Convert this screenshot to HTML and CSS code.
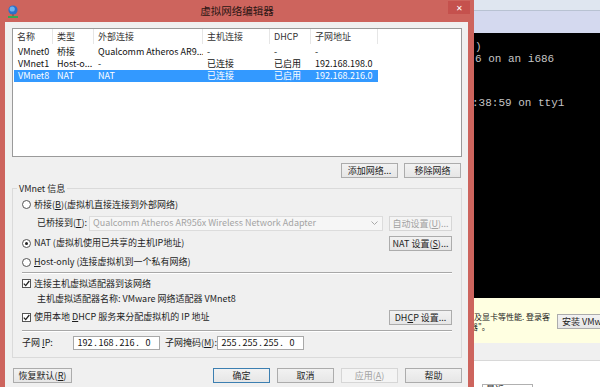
FILE: index.html
```html
<!DOCTYPE html>
<html lang="zh-CN">

<head>
    <meta charset="UTF-8">
    <meta name="viewport" content="width=device-width, initial-scale=1.0">
    <title>虚拟网络编辑器</title>
    <link rel="stylesheet" href="styles.css">
</head>

<body>
    <div class="desktop">
        <!-- 对话框 -->
        <div class="dialog">
            <div class="titlebar">
                <div class="title-left">
                    <svg class="app-icon" width="12" height="13" viewBox="0 0 12 13">
                        <circle cx="6" cy="5" r="4.6" fill="#2b6fc9" />
                        <circle cx="5.2" cy="4" r="2.6" fill="#6fb0ee" />
                        <rect x="5.5" y="9.2" width="1" height="1.8" fill="#555" />
                        <rect x="1" y="11" width="10" height="2" fill="#33a852" />
                    </svg>
                </div>
                <div class="title">虚拟网络编辑器</div>
                <div class="title-right">
                    <div class="close">✕</div>
                </div>
            </div>

            <div class="client">
                <!-- 网络列表 -->
                <div class="listview">
                    <div class="lv-head">
                        <span>名称</span>
                        <span>类型</span>
                        <span>外部连接</span>
                        <span>主机连接</span>
                        <span>DHCP</span>
                        <span>子网地址</span>
                        <span></span>
                    </div>
                    <div class="lv-body">
                        <div class="lv-row">
                            <span>VMnet0</span><span>桥接</span><span>Qualcomm Atheros AR9...</span><span>-</span><span>-</span><span>-</span>
                        </div>
                        <div class="lv-row">
                            <span>VMnet1</span><span>Host-o...</span><span>-</span><span>已连接</span><span>已启用</span><span>192.168.198.0</span>
                        </div>
                        <div class="lv-row selected">
                            <span>VMnet8</span><span>NAT</span><span>NAT</span><span>已连接</span><span>已启用</span><span>192.168.216.0</span>
                        </div>
                    </div>
                </div>

                <div class="list-buttons">
                    <button class="btn">添加网络...</button>
                    <button class="btn">移除网络</button>
                </div>

                <!-- VMnet 信息 -->
                <fieldset class="group">
                    <legend>VMnet 信息</legend>
                    <div class="group-body">
                        <div class="opt r-bridge">
                            <span class="radio"></span><span>桥接(<u>B</u>)(虚拟机直接连接到外部网络)</span>
                        </div>
                        <div class="opt r-bridged-to">
                            <span class="sub-label">已桥接到(<u>T</u>):</span>
                            <div class="combo">
                                <span>Qualcomm Atheros AR956x Wireless Network Adapter</span>
                                <svg width="7" height="4" viewBox="0 0 7 4">
                                    <polyline points="0.5,0.5 3.5,3.5 6.5,0.5" fill="none" stroke="#a8a8a8" stroke-width="1" />
                                </svg>
                            </div>
                            <button class="btn side" disabled>自动设置(<u>U</u>)...</button>
                        </div>
                        <div class="opt r-nat">
                            <span class="radio checked"></span><span>NAT (虚拟机使用已共享的主机IP地址)</span>
                            <button class="btn side push">NAT 设置(<u>S</u>)...</button>
                        </div>
                        <div class="opt r-host">
                            <span class="radio"></span><span><u>H</u>ost-only (连接虚拟机到一个私有网络)</span>
                        </div>
                        <div class="sep"></div>
                        <div class="opt r-adapter">
                            <span class="check"><svg width="7" height="7" viewBox="0 0 7 7"><polyline points="0.8,3.6 2.7,5.6 6.3,1" fill="none" stroke="#222" stroke-width="1.3" /></svg></span><span>连接主机虚拟适配器到该网络</span>
                        </div>
                        <div class="opt r-name"><span>主机虚拟适配器名称: VMware 网络适配器 VMnet8</span></div>
                        <div class="opt r-dhcp">
                            <span class="check"><svg width="7" height="7" viewBox="0 0 7 7"><polyline points="0.8,3.6 2.7,5.6 6.3,1" fill="none" stroke="#222" stroke-width="1.3" /></svg></span><span>使用本地 <u>D</u>HCP 服务来分配虚拟机的 IP 地址</span>
                            <button class="btn side push">DH<u>C</u>P 设置...</button>
                        </div>
                        <div class="sep"></div>
                        <div class="opt r-subnet">
                            <span class="ip-label">子网 <u>I</u>P:</span>
                            <div class="ip-field">
                                <span class="oct">192</span><span class="dot">.</span><span class="oct">168</span><span class="dot">.</span><span class="oct">216</span><span class="dot">.</span><span class="oct">0</span>
                            </div>
                            <span class="mask-label">子网掩码(<u>M</u>):</span>
                            <div class="ip-field">
                                <span class="oct">255</span><span class="dot">.</span><span class="oct">255</span><span class="dot">.</span><span class="oct">255</span><span class="dot">.</span><span class="oct">0</span>
                            </div>
                        </div>
                    </div>
                </fieldset>

                <div class="footer-buttons">
                    <button class="btn wide">恢复默认(<u>R</u>)</button>
                    <div class="footer-right">
                        <button class="btn default">确定</button>
                        <button class="btn">取消</button>
                        <button class="btn" disabled>应用(<u>A</u>)</button>
                        <button class="btn">帮助</button>
                    </div>
                </div>
            </div>
        </div>

        <!-- 背后的虚拟机窗口 -->
        <div class="backdrop">
            <div class="bg-top"></div>
            <div class="bg-tabs"></div>
            <div class="terminal">
                <div class="t-line l1">)</div>
                <div class="t-line l2">6 on an i686</div>
                <div class="t-line l3">:38:59 on tty1</div>
            </div>
            <div class="notice">
                <div class="notice-text">
                    <div>及显卡等性能. 登录客</div>
                    <div class="n2">器"。</div>
                </div>
                <button class="btn install">安装 VMware Tools</button>
            </div>
            <div class="bg-grey"></div>
            <div class="bg-white">
                <div class="mini-box">最近</div>
            </div>
        </div>
    </div>
</body>

</html>
```

FILE: styles.css
```css
/* 基本设置 */
* {
    margin: 0;
    padding: 0;
    box-sizing: border-box;
}

html,
body {
    width: 600px;
    height: 387px;
    overflow: hidden;
}

body {
    font-family: "Noto Sans CJK SC", "Noto Sans", sans-serif;
    font-size: 9px;
    line-height: 12px;
    color: #1e1e1e;
    background: #000;
}

u {
    text-decoration: underline;
    text-underline-offset: 1px;
}

.desktop {
    display: flex;
    height: 387px;
}

/* 对话框 */
.dialog {
    width: 474px;
    flex: none;
    display: flex;
    flex-direction: column;
    background: #cd645d;
}

.titlebar {
    height: 22px;
    flex: none;
    display: grid;
    grid-template-columns: 1fr auto 1fr;
    align-items: center;
}

.title-left {
    padding-left: 7px;
    display: flex;
    align-items: center;
}

.title {
    font-size: 10.5px;
    color: #2a1614;
}

.title-right {
    display: flex;
    justify-content: flex-end;
    align-self: start;
    padding-top: 1px;
    padding-right: 4px;
}

.close {
    width: 22px;
    height: 13px;
    background: #c5514d;
    color: #fff;
    font-size: 8px;
    line-height: 13px;
    text-align: center;
}

.client {
    flex: 1;
    margin: 0 6px 0 5px;
    background: #f0f0f0;
    padding: 6px 6px 0 7px;
}

/* 列表 */
.listview {
    height: 129px;
    border: 1px solid #9a9a9a;
    background: #fff;
}

.lv-head {
    display: grid;
    grid-template-columns: 40px 41px 109px 67px 41px 67px 1fr;
    height: 15px;
    line-height: 15px;
    color: #333;
}

.lv-head span {
    padding-left: 4px;
    border-right: 1px solid #e6e6e6;
}

.lv-head span:last-child {
    border-right: none;
}

.lv-body {
    padding-top: 2px;
}

.lv-row {
    display: grid;
    grid-template-columns: 39px 41px 109px 67px 41px 67px;
    width: max-content;
    margin-left: 1px;
    height: 12px;
    line-height: 12px;
    color: #111;
}

.lv-row span {
    padding-left: 4px;
    white-space: nowrap;
    overflow: hidden;
}

.lv-row.selected {
    background: #3399ff;
    color: #fff;
}

/* 按钮 */
.btn {
    width: 57px;
    height: 15px;
    border: 1px solid #acacac;
    background: linear-gradient(#f2f2f2, #e6e6e6);
    font: inherit;
    line-height: 13px;
    color: #1e1e1e;
    text-align: center;
    white-space: nowrap;
}

.btn:disabled {
    border-color: #d6d6d6;
    background: #f4f4f4;
    color: #a2a2a2;
}

.btn.default {
    border-color: #3c7fb1;
}

.list-buttons {
    display: flex;
    justify-content: flex-end;
    gap: 6px;
    margin-top: 6px;
    padding-right: 1px;
}

/* 分组框 */
.group {
    margin-top: 5px;
    border: 1px solid #dadada;
    padding: 0;
}

.group legend {
    margin-left: 4px;
    padding: 0 2px;
    line-height: 11px;
}

.group-body {
    padding: 2px 9px 4px 9px;
}

.opt {
    display: flex;
    align-items: center;
    white-space: nowrap;
}

.r-bridge {
    height: 17px;
}

.r-bridged-to,
.r-nat {
    height: 20px;
}

.r-host {
    height: 18px;
}

.r-adapter {
    height: 17px;
}

.r-name {
    height: 13px;
    padding-left: 15px;
}

.r-dhcp {
    height: 24px;
}

.r-subnet {
    height: 20px;
}

.radio {
    width: 9px;
    height: 9px;
    flex: none;
    border: 1px solid #555;
    border-radius: 50%;
    background: #fff;
    margin-right: 3px;
    display: flex;
    align-items: center;
    justify-content: center;
}

.radio.checked::after {
    content: "";
    width: 3px;
    height: 3px;
    border-radius: 50%;
    background: #222;
}

.check {
    width: 9px;
    height: 9px;
    flex: none;
    border: 1px solid #555;
    background: #fff;
    margin-right: 3px;
    display: flex;
    align-items: center;
    justify-content: center;
}

.sub-label {
    width: 67px;
    padding-left: 15px;
}

.combo {
    width: 294px;
    height: 15px;
    border: 1px solid #dcdcdc;
    background: #f6f6f6;
    color: #a4a4a4;
    display: flex;
    align-items: center;
    justify-content: space-between;
    padding: 0 4px 0 3px;
}

.btn.side {
    width: 63px;
}

.r-bridged-to .btn.side {
    margin-left: 6px;
}

.push {
    margin-left: auto;
}

.sep {
    height: 2px;
    margin: 1px 0;
    border-top: 1px solid #a8a8a8;
    border-bottom: 1px solid #fff;
}

.ip-label {
    width: 51px;
}

.mask-label {
    width: 52px;
    margin-left: 5px;
}

.ip-field {
    width: 87px;
    height: 14px;
    border: 1px solid #a8a8a8;
    background: #fff;
    display: flex;
    align-items: center;
    padding-left: 3px;
    color: #111;
}

.oct {
    width: 16px;
    text-align: center;
}

.dot {
    width: 5px;
    text-align: center;
}

/* 底部按钮 */
.footer-buttons {
    display: flex;
    justify-content: space-between;
    margin-top: 10px;
    padding-left: 1px;
}

.btn.wide {
    width: 59px;
}

.footer-right {
    display: flex;
    gap: 7px;
}

/* 背景窗口 */
.backdrop {
    flex: 1;
    display: flex;
    flex-direction: column;
    overflow: hidden;
    background: #fff;
}

.bg-top {
    height: 11px;
    flex: none;
    background: #dfe6f0;
    border-bottom: 1px solid #b8c2d2;
}

.bg-tabs {
    height: 22px;
    flex: none;
    background: #d4d9ef;
}

.terminal {
    height: 265px;
    flex: none;
    background: #000;
    color: #c4c4c4;
    font-family: "Liberation Mono", monospace;
    font-size: 11px;
    line-height: 12px;
    padding-top: 8px;
}

.t-line {
    height: 12px;
    white-space: pre;
}

.t-line.l1,
.t-line.l2 {
    margin-left: 1px;
}

.t-line.l3 {
    margin-top: 32px;
    margin-left: -2px;
}

.notice {
    height: 45px;
    flex: none;
    background: #ffffe1;
    display: flex;
    align-items: flex-start;
    padding-top: 14px;
}

.notice-text {
    width: 83px;
    flex: none;
    overflow: hidden;
    white-space: nowrap;
    font-size: 8px;
    line-height: 10px;
    color: #222;
}

.notice-text .n2 {
    margin-left: -4px;
}

.btn.install {
    width: 120px;
    flex: none;
    text-align: left;
    padding-left: 4px;
    margin-top: 2px;
}

.bg-grey {
    height: 18px;
    flex: none;
    background: #f0f0f0;
    border-bottom: 1px solid #d8d8d8;
}

.bg-white {
    flex: 1;
    min-height: 0;
    padding: 23px 0 0 8px;
}

.mini-box {
    width: 51px;
    height: 12px;
    border: 1px solid #b0b0b0;
    padding-left: 3px;
    line-height: 10px;
}
```
